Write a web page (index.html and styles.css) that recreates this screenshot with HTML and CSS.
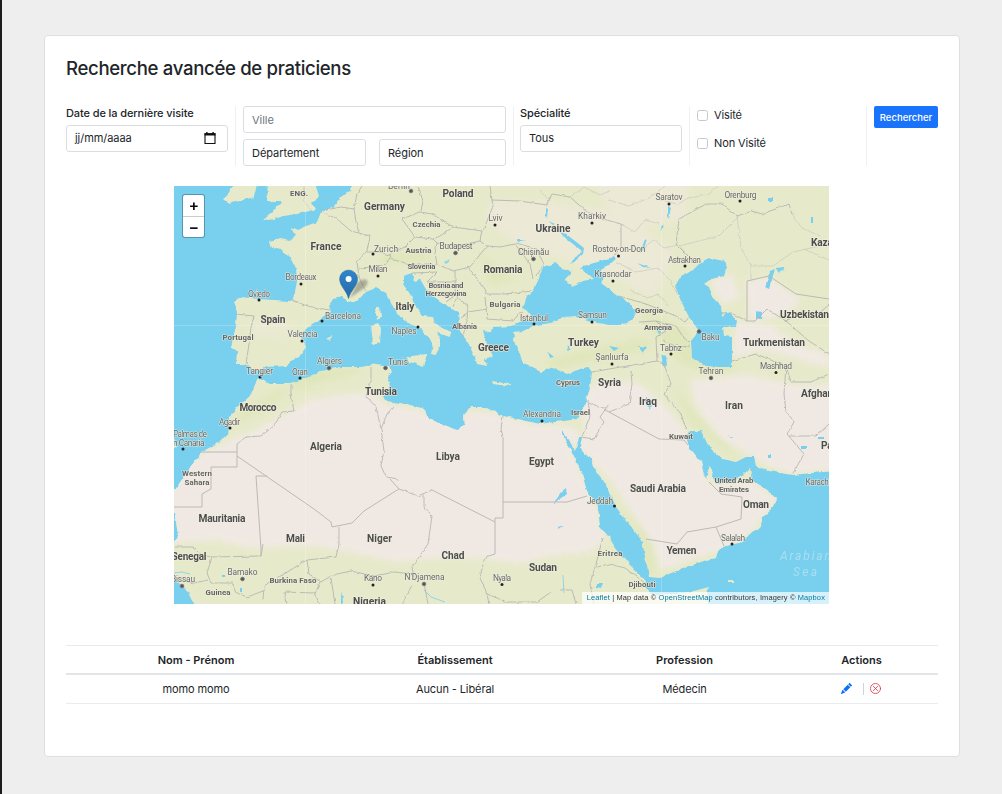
FILE: index.html
```html
<!DOCTYPE html>
<html lang="fr">
<head>
<meta charset="utf-8">
<title>Recherche avancée de praticiens</title>
<link rel="stylesheet" href="styles.css">
</head>
<body>
<main class="card">
  <h1 class="title">Recherche avancée de praticiens</h1>
  <form class="filters">
    <div class="col col-date">
      <label class="label">Date de la dernière visite</label>
      <div class="field date"><span>jj/mm/aaaa</span>
        <svg class="cal" viewBox="0 0 12 12"><path d="M1 1.7h10v9.8H1z" fill="none" stroke="#111" stroke-width="1.1"/><path d="M.5 1.2h11v2.4H.5zM2.2 0h1.4v2H2.2zM8.4 0h1.4v2H8.4z" fill="#111"/></svg>
      </div>
    </div>
    <div class="col col-place">
      <div class="field placeholder">Ville</div>
      <div class="pair"><div class="field dep">Département</div><div class="field reg">Région</div></div>
    </div>
    <div class="col col-spec">
      <label class="label">Spécialité</label>
      <div class="field">Tous</div>
    </div>
    <div class="col col-check">
      <div class="check"><span class="box"></span>Visité</div>
      <div class="check"><span class="box"></span>Non Visité</div>
    </div>
    <div class="col-btn"><button type="button" class="btn">Rechercher</button></div>
  </form>

  <div class="map">
    <svg class="tiles" viewBox="174 186 655 418">
      <defs>
        <filter id="rough" x="-5%" y="-5%" width="110%" height="110%"><feTurbulence type="fractalNoise" baseFrequency=".16" numOctaves="2" seed="4" result="n"/><feDisplacementMap in="SourceGraphic" in2="n" scale="4" xChannelSelector="R" yChannelSelector="G"/></filter>
        <filter id="fine"><feTurbulence type="fractalNoise" baseFrequency=".18" numOctaves="2" seed="4" result="n"/><feDisplacementMap in="SourceGraphic" in2="n" scale="3" xChannelSelector="R" yChannelSelector="G"/></filter>
        <filter id="soft" x="-20%" y="-20%" width="140%" height="140%"><feGaussianBlur stdDeviation="3"/></filter>
        <filter id="shade" x="-40%" y="-40%" width="180%" height="180%"><feGaussianBlur stdDeviation="1.3"/></filter>
        <linearGradient id="pin" x1="0" y1="0" x2="0" y2="1"><stop offset="0" stop-color="#2e86cd"/><stop offset="1" stop-color="#2769a5"/></linearGradient>
        <path id="land" d="M353 180L351 190 342 197 334 206 321 212 317 222 306 226 297 230 291 227 295 236 289 241 281 239 269 242 271 247 281 249 289 257 296 267 297 281 294 299 289 301 274 300 259 299 241 297 233 302 237 312 236 327 231 347 237 351 236 364 246 364 252 369 261 371 266 367 287 366 291 361 299 357 306 347 301 337 307 327 321 319 331 312 329 306 334 299 341 297 349 301 357 301 366 292 376 288 387 294 391 302 396 313 410 324 418 327 428 336 433 344 431 354 435 355 440 346 440 339 437 333 450 337 451 332 433 322 432 317 423 316 415 306 410 294 403 284 403 276 412 273 415 282 420 279 427 291 440 301 458 312 459 324 460 331 467 341 473 352 477 364 487 366 485 359 493 356 487 344 483 331 490 332 493 327 512 326 523 321 533 320 528 312 523 307 527 297 533 291 538 281 543 267 557 262 562 269 572 272 565 279 572 287 583 281 593 279 585 272 580 269 583 266 597 262 607 259 614 256 616 259 609 265 601 270 604 277 601 283 609 289 619 296 631 304 636 314 631 322 619 325 609 325 593 322 577 316 563 317 550 323 533 326 523 331 513 332 515 344 520 354 523 364 537 369 542 372 553 367 567 374 580 369 588 367 592 372 590 387 587 399 578 419 563 421 540 424 518 419 503 416 487 407 470 407 463 416 464 426 457 430 440 424 427 417 425 409 407 404 393 402 387 401 384 395 391 387 388 377 392 372 389 366 377 364 361 367 341 367 321 371 304 379 287 384 271 384 261 379 257 380 251 394 237 407 229 417 227 434 221 441 202 452 191 466 177 487 168 500 168 509 174 511 177 527 178 537 168 552 168 572 187 591 197 610 707 610 707 594 709 587 694 591 676 594 652 594 645 588 646 581 632 567 619 554 609 537 600 527 598 507 587 491 582 474 573 454 562 434 562 430 575 451 579 437 582 437 580 447 590 459 600 477 609 490 616 507 629 524 642 541 646 561 649 577 659 578 686 567 716 557 722 547 742 542 752 532 761 527 762 516 769 512 777 500 769 491 752 481 750 468 742 476 732 482 719 484 714 482 712 472 710 467 707 472 708 480 704 474 701 462 689 447 686 437 689 431 701 431 709 447 722 459 736 462 746 457 754 457 756 466 769 471 792 475 812 473 835 471 835 180ZM268 180L267 201 281 201 274 211 262 221 274 219 284 216 302 213 316 209 312 203 319 196 314 180ZM258 180L254 197 229 204 223 199 231 190 237 180ZM375 309l5-2 1 10-4 3zM371 326l7-3 3 5-1 15-7 2zM405 357L427 354 424 367 410 362ZM492 381l12 2 7 1-1 2-17-2zM556 385l15-6-5 7zM325 339l7-3-1 4zM174 439l2 7-4 2zM728 580h6v2h-6z"/>
        <clipPath id="landclip"><use href="#land"/></clipPath>
      </defs>
      <rect x="174" y="186" width="655" height="418" fill="#78cfee"/>
      <use href="#land" fill="#e7eaca" filter="url(#rough)"/>
      <g filter="url(#rough)"><g clip-path="url(#landclip)">
        <g filter="url(#soft)" fill="#f0e9e3">
          <path d="M160 545L160 480 207 450 250 432 285 414 310 400 340 394 372 393 384 404 420 410 455 425 470 410 500 414 530 424 570 426 586 440 580 400 600 378 640 384 665 405 690 435 712 485 750 480 778 500 740 545 690 560 662 570 650 540 610 480 566 436 598 512 606 540 590 552 550 556 520 564 480 558 440 558 395 562 350 552 310 546 250 548 215 540Z"/>
          <path d="M735 322L770 325 800 345 829 355V369L785 355 760 350 733 358ZM746 280l25-2 30 22-16 15-36 6zM710 280l22-5 8 22-18 8zM690 380l60-5 45 10 40 0v85l-45 4-30-12-40-25-25-32z"/>
        </g>
        <g filter="url(#soft)" fill="#eee8dc" opacity=".7"><path d="M490 200l60 2 70 10 55 40-20 45-60-25-80-30-30-20zM590 180h100l-5 40-60 10z"/><path d="M410 285l35 10 25 30-10 20z" opacity=".4"/></g>
        <g filter="url(#soft)" fill="#d9e3ae" opacity=".5"><path d="M380 255l45-5 8 10-50 6zM480 255l35 25-25 5zM545 360l50-12 50-10 8 10-100 22zM640 310l45 18 18 38 40-5-20 12-40-8-40-45zM670 380l30 40 40 40-5-2-45-35zM229 425l35-14 25-20-8-2-35 18zM640 535l12 8 2 32-8-4zM620 505l25 30-5 4zM295 370l70-3-20 10-55 14zM360 265l5 25-8 0z"/></g>
        <g filter="url(#soft)" fill="#f0e9e3"><path d="M245 325l30-8 20 10-10 12-30-3z" opacity=".35"/></g>
      </g></g>
      <g fill="#78cfee" filter="url(#fine)">
        <path d="M709 258L724 261 727 267 724 276 711 279 704 284 709 287 712 297 721 306 722 317 729 312 737 321 736 327 723 327 724 336 732 337 732 367 719 367 706 366 692 357 691 341 699 331 689 317 681 301 675 286 681 276 692 271 701 262Z"/>
        <path d="M770 271l5-2-6 20-4-2zM776 268l8-1 1 3-7 2zM756 311l6 1-1 7-5-1zM639 346l8 1-4 6zM656 329l6 3-3 2zM661 354l5 2 1 10-4-1zM609 346l10 2-5 3zM546 208l2 1-1 8-1-1zM560 232l6 2 18 14-1 6-10 9-3 0 12-12-18-14zM548 221l7 3-2 1zM517 240l9 0-8 2zM444 262l6-3-4 5zM668 205l3 2-2 12-1-2zM644 242l3-3-4 12-3 2zM637 263l14 5-8-1zM661 226l3-1-3 6zM566 488l1 6-9 6-5 4 8-12zM558 527l6-2-6 4zM568 345l2 4-3 2zM548 352l6 5-4 1zM222 575h3v2h-3zM240 588h2v4h-2zM341 595l1-4 1 12-2 1zM597 583l6 0-2 5-4-1zM818 583l4 0-1 5-4-1zM645 396l6 8-1 6-5-8zM727 435l6 2-1 1zM768 454h3v4h-3zM801 446h5v3h-5zM818 437h6v2h-6zM811 217h2v6h-2zM768 198h5v3h-5z"/>
      </g>
      <g fill="none" stroke="#78cfee" stroke-width="1" opacity=".8"><path d="M174 573l8-1 8 2M424 590l7 7 14 5M563 575l1 18"/></g>
      <g fill="none" stroke="#c3c4bd" stroke-width=".6" filter="url(#fine)">
        <path d="M609 200l20 6 20-8 16-12M660 200l18 4 10-6 20-3 10-9M621 224l14 8 10-12 14 4M640 250l14-10 10 8 14-3M616 262l20 10 22-4 12 12 8 15M630 290l18 8 10-4 10 12M737 216l4 32 10 18 0 15M691 259l-12-14M679 246l40-10 20-20M792 214l10 14 18 8M751 266l22 0 20-14 36-8M829 260l-25-11M540 190l10 12M570 197l14-10 16 8 10-4M305 186l-2 14 8 10"/>
      </g>
      <g fill="none" stroke="#b5b6b2" stroke-width=".9" stroke-linejoin="round" filter="url(#fine)">
        <path d="M236 314l18 2-3 11-2 17-3 20M292 300l15 6 22 4M321 211l16 8 14 12 19 5-3 15-10 11 2 15 7 15M326 210l15-3 13 2 3-15 5-8M354 209l2 13 3 12M367 252l14 0 10 4-5 8-12 3-15 1M391 253l14-6 10-10M402 219l18-7 12 2 21 13-13 9-7 3-18-2-13-18M418 186l5 15-2 10M453 227l29 4-2 10-23 5-20-3-4-4M437 243l-2 10 2 11 16 7 17-4 17-21-7-5M390 259l20 5 23 0M490 186l3 20-10 25M492 200l28 1 27 4 5-11 18 3 17 15 23 9 11 3 0 23-7 9M487 246l13 1 15-3 15 20 3 15M516 243l21 6 6 15-6 12M468 267l17 22 2 5 18 0 27-3M485 297l2 22 26 2 4-5 7-4M412 273l25-1-10 10 28 0 2 15-4 10M457 297l11 9-1 15-4 15M468 312l19-3M455 282l0-12M446 302l8-6M461 318l6-4"/>
        <path d="M639 322l17-1 10 10-10 6 1 24-48 8-17 3M619 296l27 8 30 12 9 6 4-5M656 321l20 5 8 12 6 5M657 361l7 3 7 20-7 10 17 20 5 15M632 384l-3 20-20 8M664 340l14 8 12-3M631 370l1 14M609 404l-9 13 4 5-10 17-12-2M588 400l2 16-8 21M609 412l-20-10"/>
        <path d="M792 214l-3-10-27 10-10-3-15 5-15-12-16 0-27 15-3 25 15 15M722 314l9-1 16 8 8 0 12-12 19 12 23 20 20 13M732 361l24-7 30 12 5 16 20 0 18-8M786 321l14-8 14 4 15-12M784 394l2 17 8 11-7 12 17 20-12 21M789 436l27 0 13-12M786 366l-2 28"/>
        <path d="M291 384l0 10 3 17-12 1-8 14-13 10-15 1-9 7M371 367l0 14-5 15 10 11 5 22 3 22-3 15 5 11 13 2M381 429l6-15 6-7M399 489l19 7 14-6M503 416l-2 13 2 8M495 554l-10 3-5 20 7 17 2 10M424 494l0 12 8 10-4 28-16 23 2 10M337 574l14-3 23 5 20-4 20 2M174 547l18 0 10 8 10 2 49-1 2-12M339 527l0 17-3 13-29 3-23 14-20 12-1 14M307 560l2 14 12 8 10-6 6-2M212 557l-5 16 4 10 22 0 4 10 10 4 16-6M174 579l20 4 14-3M284 592l30 1 6 11M284 592l2 12M320 582l-5 12M331 578l4 26M603 537l-6 23-7 24 4 20M609 564l16 4 20 15M597 567l12-3M412 585l-10 19M424 583l4 21M560 590l12 0 4 14M487 594l20 8 30 0 14-10M174 557l10 2"/>
      </g>
      <g fill="none" stroke="#bab8b6" stroke-width="1">
        <path d="M237 444v23h-26v22l-9 5v13h-28M202 452h35" /><path d="M237 456l77 53 17 13 1 5 20-4 12-12 30-19 5-3-9-10M267 476h-11l5 73v7M432 490l63 32M503 437v81h-8v36M503 502h64l20-6M587 502h10M609 412l50 27 25 1 4 5M646 539l31 5 10-12 29-5 25-8 1-22-21-3-12-12M716 527l8 19M747 321v-40l22-5 27 18 33 5"/>
      </g>
      <path d="M305.500 186v418M661.500 186v418M174 325.500h655" stroke="#fff" stroke-width=".7" opacity=".3"/>

      <g class="dots"><circle cx="373" cy="254" r="1.500"/><circle cx="378" cy="276" r="1.500"/><circle cx="301" cy="284" r="1.500"/><circle cx="259" cy="300" r="1.500"/><circle cx="322" cy="321" r="1.500"/><circle cx="302" cy="341" r="1.500"/><circle cx="260" cy="377" r="1.500"/><circle cx="300" cy="378" r="1.500"/><circle cx="418" cy="327" r="1.500"/><circle cx="495" cy="225" r="1.500"/><circle cx="592" cy="223" r="1.500"/><circle cx="534" cy="324" r="1.500"/><circle cx="592" cy="322" r="1.500"/><circle cx="669" cy="204" r="1.500"/><circle cx="740" cy="201" r="1.500"/><circle cx="618.500" cy="256" r="1.500"/><circle cx="685" cy="266" r="1.500"/><circle cx="613" cy="281" r="1.500"/><circle cx="671" cy="354" r="1.500"/><circle cx="612" cy="364" r="1.500"/><circle cx="776" cy="372.500" r="1.500"/><circle cx="230" cy="428" r="1.500"/><circle cx="183" cy="449" r="1.500"/><circle cx="542" cy="421" r="1.500"/><circle cx="614.500" cy="506" r="1.500"/><circle cx="732" cy="544" r="1.500"/><circle cx="502" cy="584.500" r="1.500"/><circle cx="373" cy="585" r="1.500"/></g>
      <g class="caps"><circle cx="411" cy="191" r="1.800"/><circle cx="329" cy="368" r="1.800"/><circle cx="385.500" cy="368" r="1.800"/><circle cx="455.500" cy="253" r="1.800"/><circle cx="533.500" cy="259" r="1.800"/><circle cx="699" cy="331.500" r="1.800"/><circle cx="711" cy="378" r="1.800"/><circle cx="182" cy="586" r="1.800"/><circle cx="242.500" cy="579" r="1.800"/><circle cx="424" cy="584" r="1.800"/></g>

      <g class="country">
        <text x="458" y="197" textLength="31">Poland</text><text x="384.500" y="210" textLength="41">Germany</text><text x="553" y="232" textLength="35">Ukraine</text><text x="326" y="250" textLength="31">France</text><text x="503" y="273" textLength="39">Romania</text><text x="405" y="310" textLength="19">Italy</text><text x="273" y="323" textLength="25">Spain</text><text x="493.500" y="350.500" textLength="31">Greece</text><text x="583.500" y="346" textLength="31">Turkey</text><text x="381" y="395" textLength="32">Tunisia</text><text x="258" y="411" textLength="37">Morocco</text><text x="609.500" y="386" textLength="23">Syria</text><text x="648" y="405" textLength="18">Iraq</text><text x="734" y="409" textLength="18">Iran</text><text x="326" y="450" textLength="32">Algeria</text><text x="448" y="459.500" textLength="24">Libya</text><text x="541.500" y="464.500" textLength="25">Egypt</text><text x="658" y="491.500" textLength="56">Saudi Arabia</text><text x="756" y="508" textLength="26">Oman</text><text x="222" y="522" textLength="47">Mauritania</text><text x="295.500" y="542" textLength="19">Mali</text><text x="379.500" y="542" textLength="25">Niger</text><text x="453" y="558.500" textLength="23">Chad</text><text x="543" y="571" textLength="28">Sudan</text><text x="681.500" y="554" textLength="30">Yemen</text><text x="774" y="345.500" textLength="62">Turkmenistan</text><text class="l" x="780" y="318" textLength="49">Uzbekistan</text><text class="l" x="811" y="246" textLength="52">Kazakhstan</text><text class="l" x="801" y="397" textLength="54">Afghanistan</text><text class="l" x="821" y="449" textLength="38">Pakistan</text><text x="189" y="559.500" textLength="35">Senegal</text><text x="369.500" y="605" textLength="33">Nigeria</text>
      </g>
      <g class="minor">
        <text x="299" y="196" textLength="18">ENG.</text><text x="426.500" y="227" textLength="28">Czechia</text><text x="418.500" y="252.500" textLength="26">Austria</text><text x="421.500" y="269" textLength="28">Slovenia</text><text x="446" y="287.500" textLength="35">Bosnia and</text><text x="446" y="296" textLength="41">Herzegovina</text><text x="505" y="307" textLength="31">Bulgaria</text><text x="464.500" y="329" textLength="25">Albania</text><text x="238" y="340" textLength="31">Portugal</text><text x="649" y="313" textLength="28">Georgia</text><text x="658" y="330" textLength="28">Armenia</text><text x="568" y="385" textLength="24">Cyprus</text><text x="580.500" y="415" textLength="19">Israel</text><text x="681" y="438.500" textLength="24">Kuwait</text><text x="734" y="483" textLength="39">United Arab</text><text x="734" y="491.500" textLength="30">Emirates</text><text x="197" y="476" textLength="30">Western</text><text x="197" y="485" textLength="25">Sahara</text><text x="293" y="583" textLength="47">Burkina Faso</text><text x="218" y="595" textLength="25">Guinea</text><text x="610" y="555.500" textLength="25">Eritrea</text><text x="642" y="587" textLength="27">Djibouti</text>
      </g>
      <g class="city">
        <text x="399" y="189" textLength="22">Berlin</text><text x="495.500" y="221" textLength="14">Lviv</text><text x="592" y="219" textLength="28">Kharkiv</text><text x="669" y="200" textLength="27">Saratov</text><text x="740.500" y="197.500" textLength="32">Orenburg</text><text x="619" y="252" textLength="53">Rostov-on-Don</text><text x="684.500" y="263" textLength="33">Astrakhan</text><text x="613" y="277" textLength="37">Krasnodar</text><text x="386" y="252" textLength="24">Zurich</text><text x="378" y="272" textLength="19">Milan</text><text x="456" y="249" textLength="33">Budapest</text><text x="533.500" y="254.500" textLength="31">Chișinău</text><text x="301" y="280" textLength="31">Bordeaux</text><text x="259" y="296.500" textLength="22">Oviedo</text><text x="343" y="318.500" textLength="36">Barcelona</text><text x="302.500" y="336.500" textLength="30">Valencia</text><text x="404" y="334" textLength="25">Naples</text><text x="534" y="321" textLength="28">Istanbul</text><text x="592.500" y="318" textLength="29">Samsun</text><text x="710.500" y="340" textLength="18">Baku</text><text x="671" y="350.500" textLength="22">Tabriz</text><text x="612" y="360" textLength="33">Şanlıurfa</text><text x="711" y="373.500" textLength="25">Tehran</text><text x="776" y="368.500" textLength="32">Mashhad</text><text x="329.500" y="363.500" textLength="25">Algiers</text><text x="259.500" y="374" textLength="27">Tangier</text><text x="300" y="375" textLength="16">Oran</text><text x="398" y="365" textLength="20">Tunis</text><text x="229.500" y="425" textLength="21">Agadir</text><text x="190" y="437" textLength="34">Palmas de</text><text x="183" y="445.500" textLength="43">Gran Canaria</text><text x="542" y="416.500" textLength="38">Alexandria</text><text x="600" y="503.500" textLength="26">Jeddah</text><text x="733" y="540.500" textLength="24">Salalah</text><text x="818" y="485" textLength="25">Karachi</text><text x="502" y="581" textLength="18">Nyala</text><text x="373" y="581" textLength="18">Kano</text><text x="424.500" y="579.500" textLength="40">N'Djamena</text><text x="242.500" y="575" textLength="30">Bamako</text><text x="183" y="581.500" textLength="24">Bissau</text>
      </g>
      <g class="sea"><text x="780" y="560" textLength="51">Arabian</text><text x="793" y="576" textLength="24">Sea</text></g>

      <path d="M350 298l7-15q5-5 10-3 2 4-3 8z" fill="#555" opacity=".4" filter="url(#shade)"/>
      <path d="M348.500 298.500C347 291 339.700 286 339.700 279a8.850 8.850 0 0 1 17.700 0C357.400 286 350 291 348.500 298.500z" fill="url(#pin)" stroke="#2a6fac" stroke-width=".7"/><circle cx="348.600" cy="279" r="3" fill="#fff"/>
    </svg>
    <div class="zoom"><span class="zbtn">+</span><span class="zbtn">−</span></div>
    <div class="attrib"><a>Leaflet</a> | Map data © <a>OpenStreetMap</a> contributors, Imagery © <a>Mapbox</a></div>
  </div>

  <table class="results">
    <thead><tr><th class="c1">Nom - Prénom</th><th class="c2">Établissement</th><th class="c3">Profession</th><th class="c4">Actions</th></tr></thead>
    <tbody><tr><td>momo momo</td><td>Aucun - Libéral</td><td>Médecin</td>
      <td><div class="actions">
        <svg class="ico" viewBox="0 0 16 16" fill="#0d6efd"><path d="M12.854.146a.5.5 0 0 0-.707 0L10.500 1.793 14.207 5.500l1.647-1.646a.5.5 0 0 0 0-.708zm.646 6.061L9.793 2.500 3.293 9H3.500a.5.5 0 0 1 .5.5v.5h.5a.5.5 0 0 1 .5.5v.5h.5a.5.5 0 0 1 .5.5v.5h.5a.5.5 0 0 1 .5.5v.207zm-7.468 7.468A.5.5 0 0 1 6 13.500V13h-.5a.5.5 0 0 1-.5-.5V12h-.5a.5.5 0 0 1-.5-.5V11h-.5a.5.5 0 0 1-.5-.5V10h-.5a.5.5 0 0 1-.175-.032l-.179.178a.5.5 0 0 0-.11.168l-2 5a.5.5 0 0 0 .65.65l5-2a.5.5 0 0 0 .168-.11z"/></svg>
        <span class="sep"></span>
        <svg class="ico" viewBox="0 0 16 16" fill="none" stroke="#dc3545" stroke-width="1.200" stroke-linecap="round"><circle cx="8" cy="8" r="7.300"/><path d="M5 5l6 6M11 5l-6 6"/></svg>
      </div></td></tr></tbody>
  </table>
</main>
</body>
</html>
```
FILE: styles.css
```css
* { box-sizing: border-box; }
body { margin: 0; height: 794px; padding: 35px 42px 0 42px; background: #eee; border-left: 2px solid #1c1c1e; font-family: Inter, "Liberation Sans", sans-serif; font-size: 11px; color: #212529; overflow: hidden; }
.card { height: 722px; padding: 21px 20px 0 21px; background: #fff; border: 1px solid #dedfe0; border-radius: 4px; }
.title { margin: 0; height: 23px; line-height: 23px; font-size: 18.600px; font-weight: 500; letter-spacing: -.34px; white-space: nowrap; }
.filters { display: grid; grid-template-columns: 170px 278px 176px 177px 71px; height: 60px; margin-top: 26px; }
.col { padding: 0 7px; border-right: 1px solid #f0f0f1; }
.col-date { padding-left: 0; }
.col-spec { padding-left: 6px; }
.col-btn { padding-left: 7px; }
.label { display: block; height: 19px; line-height: 14px; font-weight: 500; letter-spacing: -.1px; white-space: nowrap; }
.field { display: flex; align-items: center; height: 27px; padding: 0 8px 1px; border: 1px solid #dadee2; border-radius: 3px; background: #fff; letter-spacing: -.05px; }
.date { justify-content: space-between; padding-right: 11px; }
.cal { width: 12px; height: 12px; }
.placeholder { color: #6c757d; padding-bottom: 0; }
.pair { display: flex; justify-content: space-between; margin-top: 6px; }
.pair .field { padding-bottom: 0; }
.dep { width: 123px; }
.reg { width: 127px; }
.check { display: flex; align-items: center; gap: 6px; height: 18px; margin-bottom: 10px; letter-spacing: -.12px; }
.box { width: 11px; height: 11px; border: 1px solid #c6c9cc; border-radius: 2.500px; }
.btn { display: block; width: 64px; height: 22px; padding: 0; border: 0; border-radius: 2px; background: #1a73fb; color: #fff; font: 500 9.500px Inter, sans-serif; }
.map { position: relative; width: 655px; height: 418px; margin: 20px 0 0 108px; overflow: hidden; }
.tiles { display: block; width: 655px; height: 418px; }
.tiles text { font-family: Roboto, "Open Sans", sans-serif; text-anchor: middle; paint-order: stroke; stroke: rgba(240,238,222,.75); stroke-width: 1.500px; stroke-linejoin: round; }
.tiles .country text { font-size: 10.200px; font-weight: 700; fill: #4c4d4f; }
.tiles .minor text { font-size: 7.900px; font-weight: 700; fill: #626466; stroke-width: 1.200px; }
.tiles .city text { font-size: 8.400px; fill: #66696b; stroke-width: 1.200px; }
.tiles text.l { text-anchor: start; }
.tiles .sea text { font-size: 12px; font-style: italic; fill: #a9dff2; stroke: none; text-anchor: start; }
.dots { fill: #222; }
.caps { fill: #555; stroke: #777; stroke-width: 1px; }
.zoom { position: absolute; left: 8px; top: 8px; width: 23px; height: 44px; border: 1px solid rgba(0,0,0,.28); border-radius: 3px; background: #fff; background-clip: padding-box; }
.zbtn { display: flex; align-items: center; justify-content: center; height: 21px; padding-left: 1px; font: bold 15px "Liberation Sans", sans-serif; color: #000; }
.zbtn + .zbtn { border-top: 1px solid #ccc; }
.attrib { position: absolute; right: 0; bottom: 0; width: 247px; height: 12px; padding-right: 4px; line-height: 12px; text-align: right; font-family: "Liberation Sans", sans-serif; font-size: 7.450px; letter-spacing: .135px; color: #333; background: rgba(255,255,255,.7); white-space: nowrap; }
.attrib a { color: #0078a8; }
.results { width: 872px; margin-top: 41px; border-collapse: separate; border-spacing: 0; table-layout: fixed; text-align: center; }
.results th, .results td { height: 29px; padding: 0; vertical-align: middle; }
.results th { height: 30px; border-top: 1px solid #e9eaec; border-bottom: 2px solid #e2e5e8; font-weight: 600; }
.results td { border-bottom: 1px solid #ebecee; letter-spacing: -.1px; }
.c1 { width: 260px; } .c2 { width: 258px; } .c3 { width: 201px; } .c4 { width: 153px; }
.actions { display: flex; align-items: center; justify-content: center; padding: 0 1px 1px 0; }
.ico { width: 11px; height: 11px; }
.sep { width: 1px; height: 12px; margin: 0 6px 0 11px; background: #cfd4d9; }
```
